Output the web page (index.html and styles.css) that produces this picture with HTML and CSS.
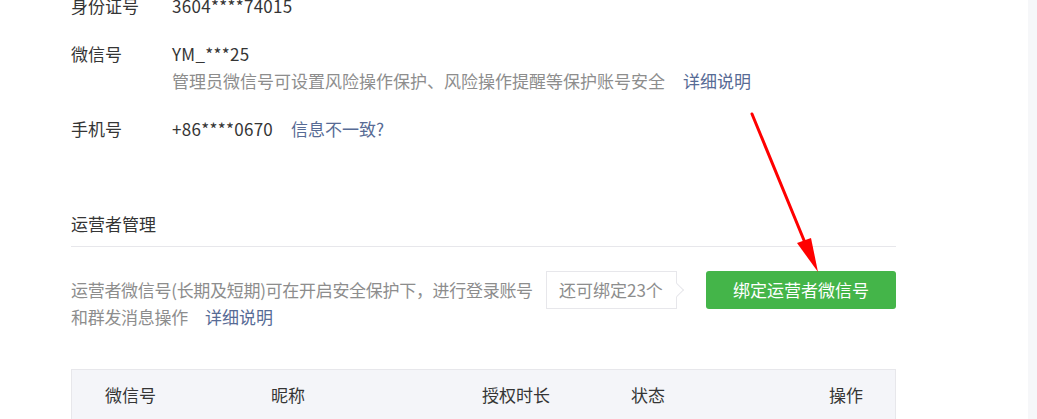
FILE: index.html
```html
<!DOCTYPE html>
<html lang="zh-cn">

<head>
<title>账号详情</title>
<meta charset="utf-8" />
<meta name="viewport" content="width=device-width, initial-scale=1.0">

<link rel="stylesheet" href="styles.css">
</head>

<body>
<div class="layout">
  <div class="main">
    <ul class="info-list">
      <li class="info-row">
        <span class="info-label">身份证号</span>
        <div class="info-value">3604****74015</div>
      </li>
      <li class="info-row">
        <span class="info-label">微信号</span>
        <div class="info-value">
          YM_***25
          <p class="info-tips">管理员微信号可设置风险操作保护、风险操作提醒等保护账号安全<a href="#" class="link">详细说明</a></p>
        </div>
      </li>
      <li class="info-row">
        <span class="info-label">手机号</span>
        <div class="info-value">+86****0670<a href="#" class="link">信息不一致?</a></div>
      </li>
    </ul>

    <h3 class="section-title">运营者管理</h3>
    <div class="operator-bar">
      <p class="operator-tips">运营者微信号(长期及短期)可在开启安全保护下，进行登录账号和群发消息操作<a href="#" class="link">详细说明</a></p>
      <span class="bind-count">还可绑定23个</span>
      <a href="#" class="btn-green">绑定运营者微信号</a>
    </div>

    <div class="table-head">
      <span>微信号</span>
      <span>昵称</span>
      <span>授权时长</span>
      <span>状态</span>
      <span>操作</span>
    </div>
  </div>
  <div class="side-strip"></div>
</div>

<!-- red annotation arrow over the page -->
<svg class="mark-arrow" width="1037" height="419" viewBox="0 0 1037 419">
  <line x1="752" y1="114" x2="808" y2="250" stroke="#ff0000" stroke-width="3" stroke-linecap="round" />
  <polygon points="797,243 811,238 818,272" fill="#ff0000" />
</svg>
</body>

</html>
```

FILE: styles.css
```css
body {
  margin: 0;
  background-color: white;
  font-family: "Noto Sans CJK SC", "Noto Sans", sans-serif;
  font-size: 17px;
  color: #353535;
  overflow: hidden;
}

ul, p, h3 {
  margin: 0;
  padding: 0;
}

a {
  text-decoration: none;
}

.layout {
  display: flex;
  height: 419px;
}

.main {
  width: 825px;
  padding-left: 71px;
}

.side-strip {
  margin-left: auto;
  width: 9px;
  background-color: #f6f7f9;
}

.info-list {
  list-style: none;
  margin-top: -8px;
}

.info-row {
  display: flex;
  line-height: 27px;
  margin-bottom: 21px;
}

.info-label {
  width: 101px;
  flex-shrink: 0;
}

.info-value {
  letter-spacing: 0.3px;
}

.info-tips {
  color: #8d8d8d;
  letter-spacing: 0;
}

.link {
  color: #576b95;
  margin-left: 18px;
  letter-spacing: 0;
}

.section-title {
  font-size: 17px;
  font-weight: normal;
  line-height: 27px;
  margin-top: 68px;
  padding-bottom: 9px;
  border-bottom: 1px solid #e7e7eb;
}

.operator-bar {
  display: flex;
  align-items: flex-start;
  margin-top: 24px;
}

.operator-tips {
  flex: 1;
  color: #8d8d8d;
  line-height: 27px;
  padding-top: 5px;
  margin-right: 5px;
  letter-spacing: -0.3px;
}

.operator-tips .link {
  margin-left: 17px;
}

.bind-count {
  position: relative;
  width: 131px;
  height: 38px;
  box-sizing: border-box;
  border: 1px solid #e7e7eb;
  padding-left: 12px;
  line-height: 36px;
  color: #8d8d8d;
  background-color: white;
}

.bind-count:after {
  content: "";
  position: absolute;
  right: -6px;
  top: 13px;
  width: 9px;
  height: 9px;
  background-color: white;
  border-top: 1px solid #e7e7eb;
  border-right: 1px solid #e7e7eb;
  transform: rotate(45deg);
}

.btn-green {
  margin-left: 29px;
  width: 190px;
  height: 38px;
  line-height: 38px;
  text-align: center;
  color: white;
  background-color: #44b549;
  border-radius: 3px;
}

.table-head {
  display: grid;
  grid-template-columns: 166px 211px 149px 1fr auto;
  margin-top: 39px;
  height: 60px;
  padding: 0 32px 0 33px;
  line-height: 50px;
  background-color: #f4f5f9;
  border: 1px solid #e7e7eb;
  border-bottom: none;
}

.mark-arrow {
  position: absolute;
  left: 0;
  top: 0;
  pointer-events: none;
}
```
